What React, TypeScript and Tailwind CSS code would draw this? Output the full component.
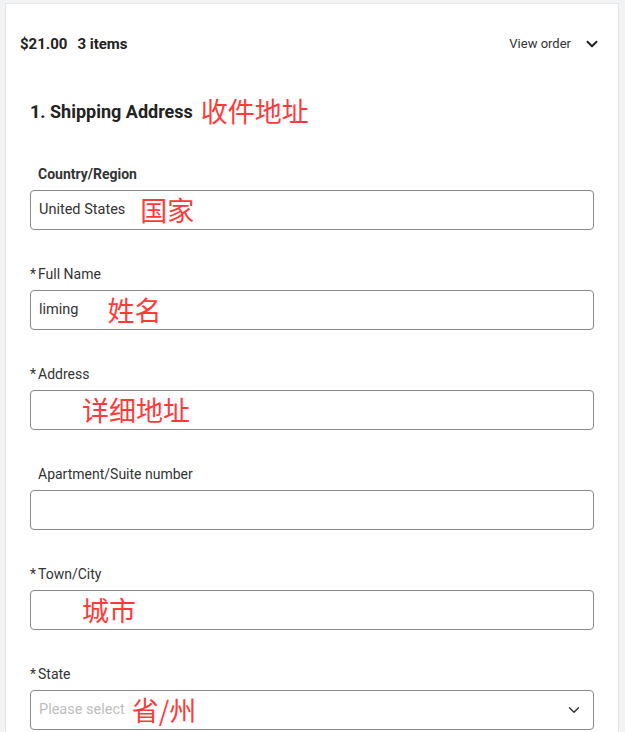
import { ChevronDown } from "lucide-react";

type Field = {
  label: string;
  required?: boolean;
  bold?: boolean;
  value?: string;
  placeholder?: string;
  note?: string;
  noteGap: string;
  select?: boolean;
};

const fields: Field[] = [
  { label: "Country/Region", bold: true, value: "United States", note: "国家", noteGap: "ml-[15px]" },
  { label: "Full Name", required: true, value: "liming", note: "姓名", noteGap: "ml-[29px]" },
  { label: "Address", required: true, note: "详细地址", noteGap: "ml-[43px]" },
  { label: "Apartment/Suite number", noteGap: "" },
  { label: "Town/City", required: true, note: "城市", noteGap: "ml-[43px]" },
  { label: "State", required: true, placeholder: "Please select", note: "省/州", noteGap: "ml-[7px]", select: true },
];

function Note({ text, gap }: { text: string; gap: string }) {
  return (
    <span
      className={`${gap} -mt-[2px] text-[27px] leading-none text-[#ff3a3a]`}
      style={{ fontFamily: '"Noto Sans CJK SC", sans-serif' }}
    >
      {text}
    </span>
  );
}

function FormField({ field }: { field: Field }) {
  return (
    <div>
      <div className="flex h-5 items-center text-[14px] text-[#333]">
        <span className="w-2 leading-none">{field.required ? "*" : ""}</span>
        <span className={field.bold ? "font-bold" : ""}>{field.label}</span>
      </div>
      <div className="mt-[6px] flex h-10 items-center rounded-[4px] border border-[#8a8a8a] pl-2 pr-[10px]">
        {field.value && <span className="text-[14.5px] text-[#333]">{field.value}</span>}
        {field.placeholder && <span className="text-[14.5px] text-[#bdbdbd]">{field.placeholder}</span>}
        {field.note && <Note text={field.note} gap={field.noteGap} />}
        {field.select && (
          <ChevronDown className="ml-auto h-[18px] w-[18px] text-[#333]" strokeWidth={1.8} />
        )}
      </div>
    </div>
  );
}

export default function App() {
  return (
    <div
      className="min-h-screen bg-[#f2f3f5] pl-[5px] pr-[6px] pt-[3px]"
      style={{ fontFamily: "Roboto, sans-serif" }}
    >
      <div className="border border-b-0 border-[#e6e6e6] bg-white pb-10">
        <div className="flex h-20 items-center justify-between pl-[14px] pr-[17px]">
          <div className="flex items-center gap-[10px] text-[15px] font-bold text-[#222]">
            <span>$21.00</span>
            <span>3 items</span>
          </div>
          <div className="flex items-center gap-[12px] text-[13px] text-[#333]">
            <span>View order</span>
            <ChevronDown className="h-[18px] w-[18px] text-[#222]" strokeWidth={2.6} />
          </div>
        </div>

        <div className="px-6">
          <div className="mt-[13px] flex h-7 items-center">
            <h2 className="text-[18px] font-bold text-[#222]">1. Shipping Address</h2>
            <Note text="收件地址" gap="ml-[8px]" />
          </div>

          <div className="mt-[39px] flex flex-col gap-[34px]">
            {fields.map((field) => (
              <FormField key={field.label} field={field} />
            ))}
          </div>
        </div>
      </div>
    </div>
  );
}
